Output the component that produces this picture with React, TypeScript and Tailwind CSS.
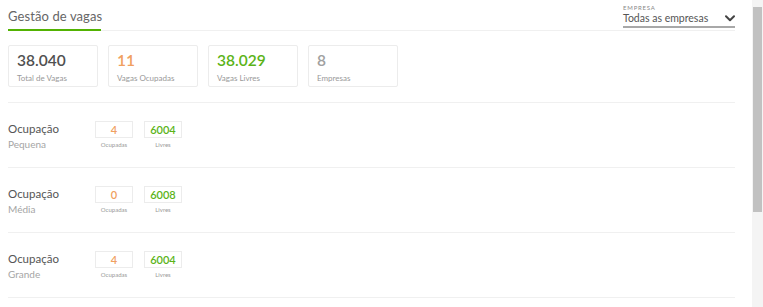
import React from "react";

const stats = [
  { value: "38.040", label: "Total de Vagas", color: "text-[#505050]" },
  { value: "11", label: "Vagas Ocupadas", color: "text-[#f0a060]" },
  { value: "38.029", label: "Vagas Livres", color: "text-[#5bb318]" },
  { value: "8", label: "Empresas", color: "text-[#a0a0a0]" },
];

const rows = [
  { size: "Pequena", busy: 4, free: 6004 },
  { size: "Média", busy: 0, free: 6008 },
  { size: "Grande", busy: 4, free: 6004 },
];

function Chevron() {
  return (
    <svg width="10" height="7" viewBox="0 0 10 7" fill="none">
      <path d="M1 1.2L5 5.2L9 1.2" stroke="#444" strokeWidth="2" strokeLinecap="round" strokeLinejoin="round" />
    </svg>
  );
}

export default function App() {
  return (
    <div className="flex w-[763px] h-[307px] overflow-hidden bg-white font-['Lato',sans-serif]">
      <div className="w-[735px] pl-2 shrink-0">
        {/* header */}
        <div className="flex justify-between items-start h-[31px] border-b border-[#f0f0f0]">
          <div className="flex flex-col">
            <span className="text-[13px] leading-[18px] text-[#666] pt-[7px] tracking-[0.1px]">Gestão de vagas</span>
            <div className="mt-[4px] h-[2px] w-[93px] bg-[#52b202]" />
          </div>
          <div className="w-[112px] flex flex-col pt-[4px]">
            <span className="text-[6px] leading-[7px] tracking-[0.8px] text-[#888]">EMPRESA</span>
            <div className="flex items-center justify-between h-[15px] pr-[0px]">
              <span className="text-[10.5px] leading-[13px] text-[#555]">Todas as empresas</span>
              <Chevron />
            </div>
            <div className="h-[2px] bg-[#a8a8a8]" />
          </div>
        </div>

        {/* stats */}
        <div className="flex gap-[10px] pt-[14px] pb-[15px] border-b border-[#f0f0f0]">
          {stats.map((s) => (
            <div key={s.label} className="w-[90px] h-[42px] border border-[#ececec] rounded-[2px] px-[8px] pt-[5px]">
              <div className={`text-[15.5px] leading-[19px] font-semibold ${s.color}`}>{s.value}</div>
              <div className="text-[8px] leading-[9px] mt-[4px] text-[#999]">{s.label}</div>
            </div>
          ))}
        </div>

        {/* rows */}
        {rows.map((r) => (
          <div key={r.size} className="flex items-start h-[65px] pt-[18px] border-b border-[#f0f0f0]">
            <div className="w-[87px]">
              <div className="text-[11.5px] leading-[15px] text-[#555]">Ocupação</div>
              <div className="text-[10px] leading-[11px] mt-[3px] text-[#a5a5a5]">{r.size}</div>
            </div>
            <div className="flex gap-[11px]">
              <div className="flex flex-col items-center w-[38px]">
                <div className="w-[38px] h-[17px] border border-[#ececec] flex items-center justify-center text-[11px] leading-[12px] font-semibold text-[#f0a060]">
                  {r.busy}
                </div>
                <div className="h-[8px] mt-[3px] text-[6px] leading-[8px] text-[#999]">Ocupadas</div>
              </div>
              <div className="flex flex-col items-center w-[38px]">
                <div className="w-[38px] h-[17px] border border-[#ececec] flex items-center justify-center text-[11px] leading-[12px] font-semibold text-[#5bb318]">
                  {r.free}
                </div>
                <div className="h-[8px] mt-[3px] text-[6px] leading-[8px] text-[#999]">Livres</div>
              </div>
            </div>
          </div>
        ))}
      </div>
      <div className="flex-1" />
      {/* scrollbar */}
      <div className="w-[11px] h-full bg-[#f4f4f4] flex flex-col items-center pt-[7px]">
        <div className="w-[9px] h-[205px] bg-[#c1c1c1]" />
      </div>
    </div>
  );
}
